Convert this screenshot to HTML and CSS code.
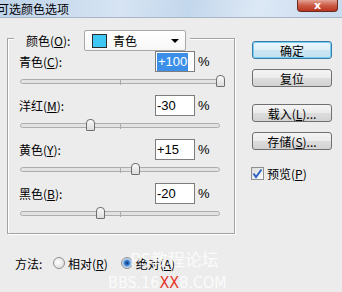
FILE: index.html
```html
<!doctype html>
<html lang="zh">
<head>
    <meta charset="UTF-8">
    <title>可选颜色选项</title>
    <link rel="stylesheet" href="styles.css">
</head>
<body>

<div class="window">
    <div class="titlebar">
        <span class="title">可选颜色选项</span>
        <span class="close">x</span>
    </div>

    <div class="main">
        <div class="group">
            <div class="group-head">
                <span class="head-lbl">颜色(<u>O</u>):</span>
                <div class="select">
                    <span class="swatch"></span>
                    <span class="sel-text">青色</span>
                    <span class="arrow"></span>
                </div>
            </div>

            <div class="adj">
                <div class="adj-top">
                    <span class="lbl">青色(<u>C</u>):</span>
                    <span class="field"><span class="selected">+100</span></span>
                    <span class="pct">%</span>
                </div>
                <div class="slider"><span class="thumb" style="left: 200px"></span></div>
            </div>
            <div class="adj">
                <div class="adj-top">
                    <span class="lbl">洋红(<u>M</u>):</span>
                    <span class="field">-30</span>
                    <span class="pct">%</span>
                </div>
                <div class="slider"><span class="thumb" style="left: 70px"></span></div>
            </div>
            <div class="adj">
                <div class="adj-top">
                    <span class="lbl">黄色(<u>Y</u>):</span>
                    <span class="field">+15</span>
                    <span class="pct">%</span>
                </div>
                <div class="slider"><span class="thumb" style="left: 115px"></span></div>
            </div>
            <div class="adj">
                <div class="adj-top">
                    <span class="lbl">黑色(<u>B</u>):</span>
                    <span class="field">-20</span>
                    <span class="pct">%</span>
                </div>
                <div class="slider"><span class="thumb" style="left: 80px"></span></div>
            </div>
        </div>

        <div class="side">
            <span class="btn btn-default">确定</span>
            <span class="btn btn-reset">复位</span>
            <span class="btn btn-load">载入(<u>L</u>)...</span>
            <span class="btn btn-save">存储(<u>S</u>)...</span>
            <label class="check">
                <span class="box">
                    <svg width="11" height="11" viewBox="0 0 11 11">
                        <path d="M1.5 5.5 L4 9 L9.5 1.5" fill="none" stroke="#2a63c8" stroke-width="2"/>
                    </svg>
                </span>
                <span>预览(<u>P</u>)</span>
            </label>
        </div>
    </div>

    <div class="method">
        <span class="method-lbl">方法:</span>
        <span class="radio"></span>
        <span class="radio-lbl">相对(<u>R</u>)</span>
        <span class="radio on"></span>
        <span class="radio-lbl">绝对(<u>A</u>)</span>
    </div>

    <div class="watermark">
        <div class="wm-top">PS教程论坛</div>
        <div class="wm-bottom">BBS.16<span class="wm-red">XX</span>8.COM</div>
    </div>
</div>

</body>
</html>
```

FILE: styles.css
```css
body {
    margin: 0;
    padding: 0;
    font-family: "Noto Sans CJK SC", sans-serif;
    font-size: 12px;
    color: #000;
}

u {
    text-decoration: underline;
    text-underline-offset: 1px;
}

.window {
    position: relative;
    display: flex;
    flex-direction: column;
    width: 342px;
    height: 292px;
    overflow: hidden;
    background: #ececec;
}

/* title bar */

.titlebar {
    display: flex;
    align-items: flex-start;
    height: 17px;
    border-bottom: 1px solid #a9b6c6;
    background: linear-gradient(100deg, #bed3ea 0%, #d6e4f3 35%, #c3d7ec 55%, #dce8f5 75%, #c9dbef 100%);
}

.title {
    margin-left: -3px;
    line-height: 17px;
}

.close {
    display: flex;
    align-items: center;
    justify-content: center;
    width: 41px;
    height: 12px;
    margin-left: auto;
    margin-right: 4px;
    box-sizing: border-box;
    border: 1px solid #6b2a20;
    border-top: none;
    border-radius: 0 0 4px 4px;
    background: linear-gradient(#e2a394, #cc5a45 50%, #b8351f);
    color: #fff;
    font-family: "DejaVu Sans", sans-serif;
    font-weight: bold;
    font-size: 11px;
    line-height: 1;
}

/* main area */

.main {
    display: flex;
    align-items: flex-start;
}

.group {
    width: 228px;
    height: 196px;
    margin: 20px 0 0 7px;
    box-sizing: border-box;
    border: 1px solid #a3a3a3;
    box-shadow: inset 1px 1px 0 #fff, 1px 1px 0 #fff;
}

.group-head {
    display: flex;
    align-items: center;
    width: fit-content;
    height: 21px;
    margin: -9px 0 0 6px;
    padding: 0 4px 0 12px;
    background: #ececec;
}

.head-lbl {
    width: 58px;
}

.select {
    display: flex;
    align-items: center;
    width: 102px;
    height: 21px;
    box-sizing: border-box;
    border: 1px solid #a9a9a9;
    border-radius: 2px;
    background: linear-gradient(#ffffff, #f7f7f7);
}

.swatch {
    width: 15px;
    height: 14px;
    margin-left: 7px;
    box-sizing: border-box;
    border: 1px solid #2b2b2b;
    background: #3ec7f3;
}

.sel-text {
    margin-left: 6px;
}

.arrow {
    margin-left: auto;
    margin-right: 6px;
    width: 0;
    height: 0;
    border-left: 4px solid transparent;
    border-right: 4px solid transparent;
    border-top: 4px solid #000;
}

.adj {
    display: flex;
    flex-direction: column;
    height: 44px;
}

.adj:first-of-type {
    margin-top: 10px;
}

.adj-top {
    display: flex;
    align-items: center;
    height: 21px;
}

.lbl {
    width: 147px;
    padding-left: 11px;
    box-sizing: border-box;
}

.field {
    display: flex;
    align-items: center;
    width: 40px;
    height: 21px;
    padding-left: 1px;
    box-sizing: border-box;
    border: 1px solid #7d7d7d;
    background: #fff;
    font-family: "Liberation Sans", sans-serif;
    font-size: 13px;
}

.selected {
    padding: 1px 1px 2px 1px;
    background: #3b8fe8;
    color: #fff;
    line-height: 15px;
}

.pct {
    margin-left: 3px;
    font-family: "Liberation Sans", sans-serif;
    font-size: 13px;
}

.slider {
    position: relative;
    width: 200px;
    height: 12px;
    margin: 3px 0 0 12px;
}

.slider::before {
    content: '';
    position: absolute;
    left: 0;
    right: 0;
    top: 4px;
    height: 3px;
    border: 1px solid #adadad;
    border-radius: 3px;
    background: #e2e2e2;
}

.slider::after {
    content: '';
    position: absolute;
    left: 100px;
    top: 5px;
    width: 1px;
    height: 5px;
    background: #a9a9a9;
}

.thumb {
    position: absolute;
    top: 0;
    z-index: 1;
    width: 9px;
    height: 12px;
    margin-left: -4px;
    box-sizing: border-box;
    border: 1px solid #6f6f6f;
    border-radius: 4px 4px 1px 1px;
    background: linear-gradient(#fafafa, #dcdcdc);
}

/* right column */

.side {
    display: flex;
    flex-direction: column;
    width: 80px;
    margin: 23px 0 0 17px;
}

.btn {
    display: flex;
    align-items: center;
    justify-content: center;
    height: 18px;
    box-sizing: border-box;
    border: 1px solid #707070;
    border-radius: 3px;
    background: linear-gradient(#f4f4f4 0%, #ebebeb 50%, #dddddd 51%, #d2d2d2 100%);
}

.btn-default {
    border: 1px solid #3d7ba6;
    box-shadow: inset 0 0 0 1px #6fd2f4;
    background: linear-gradient(#eaf6fb 0%, #e0eff7 50%, #cde6f3 51%, #c4e0f0 100%);
}

.btn-reset {
    margin-top: 10px;
}

.btn-load {
    margin-top: 17px;
}

.btn-save {
    margin-top: 10px;
}

.check {
    display: flex;
    align-items: center;
    gap: 3px;
    margin: 15px 0 0 -1px;
}

.box {
    display: flex;
    align-items: center;
    justify-content: center;
    width: 13px;
    height: 13px;
    box-sizing: border-box;
    border: 1px solid #8e8f8f;
    background: linear-gradient(135deg, #dcdcdc, #fdfdfd);
}

/* bottom row */

.method {
    display: flex;
    align-items: center;
    height: 16px;
    margin: 21px 0 0 15px;
}

.method-lbl {
    width: 38px;
}

.radio {
    width: 12px;
    height: 12px;
    box-sizing: border-box;
    border: 1px solid #8f8f8f;
    border-radius: 50%;
    background: radial-gradient(circle at 40% 40%, #ffffff, #d6d6d6);
}

.radio.on {
    margin-left: 13px;
    background: radial-gradient(circle, #14315e 0, #2a6fc7 2px, #9cc8ef 4px, #e8e8e8 5px);
}

.radio-lbl {
    margin-left: 3px;
}

/* watermark over the bottom */

.watermark {
    position: absolute;
    left: 108px;
    top: 250px;
    color: rgba(255, 255, 255, 0.8);
    line-height: 1;
}

.wm-top {
    margin-left: 22px;
    font-size: 17px;
}

.wm-bottom {
    margin-top: 8px;
    font-family: "DejaVu Sans Condensed", "DejaVu Sans", sans-serif;
    font-stretch: condensed;
    font-size: 16px;
}

.wm-red {
    color: #e8352b;
}
```
